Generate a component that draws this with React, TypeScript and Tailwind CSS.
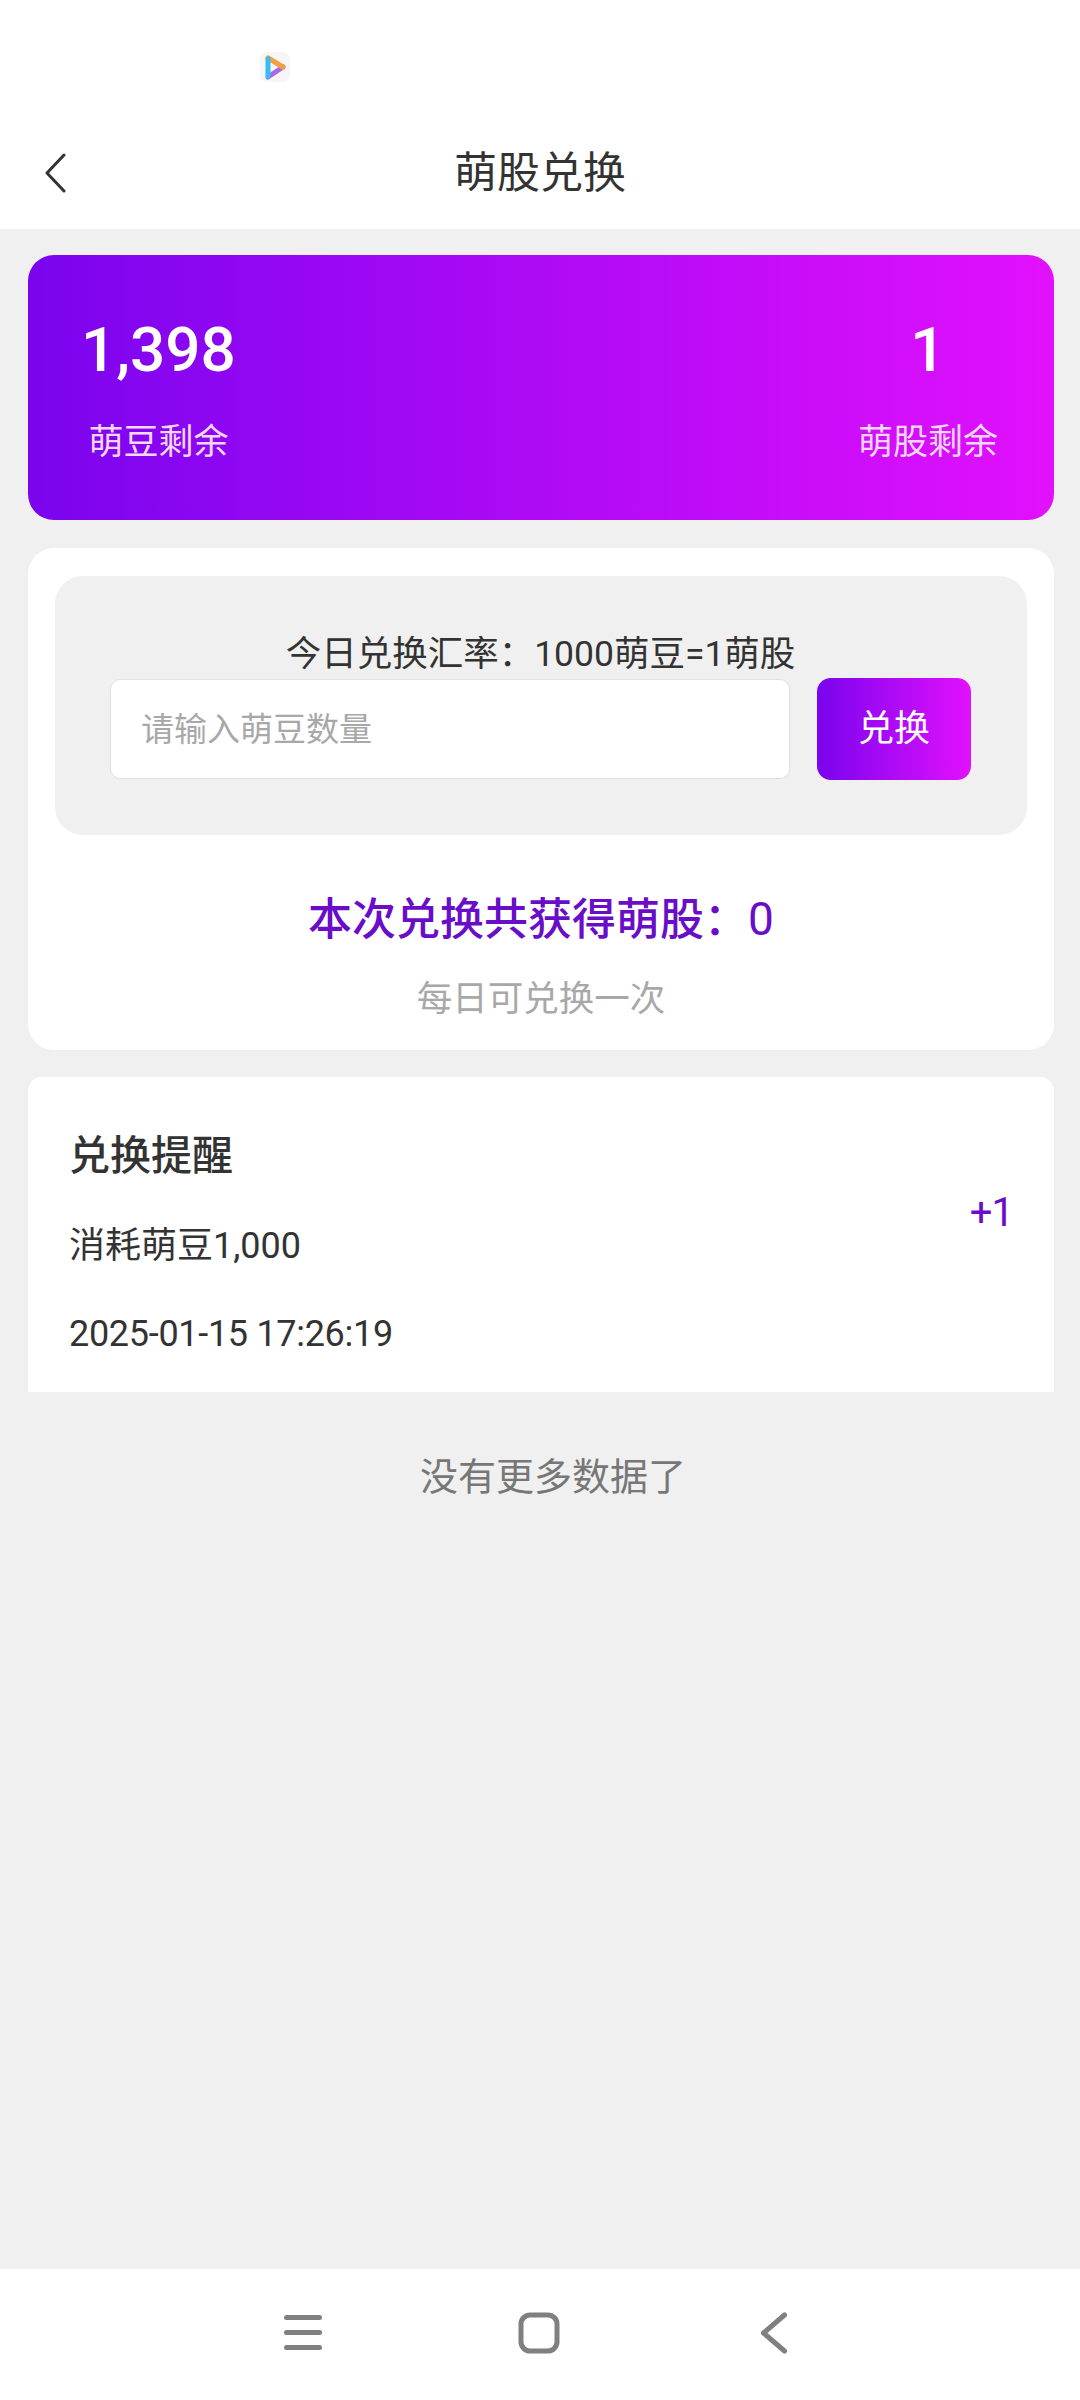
import React from "react";

const FONT = "font-['Roboto','Noto_Sans_CJK_SC',sans-serif]";

function PlayBadge() {
  return (
    <div className="flex h-[30px] w-[30px] items-center justify-center rounded-[7px] bg-[#f6f6f8]">
      <svg width="30" height="30" viewBox="0 0 30 30" fill="none" strokeWidth="5" strokeLinecap="round">
        <path d="M8 25 L23 15" stroke="#a868ea" />
        <path d="M8 6 L23 15" stroke="#f0a040" />
        <path d="M8 7 L8 24" stroke="#38bdf0" />
      </svg>
    </div>
  );
}

function NavIcons() {
  return (
    <nav className="flex h-[131px] items-start bg-white pl-[284px] pt-[43px]">
      <svg width="38" height="40" viewBox="0 0 38 40" fill="none" stroke="#808080" strokeWidth="5" strokeLinecap="round">
        <path d="M2.5 5.5H35.5" />
        <path d="M2.5 20.5H35.5" />
        <path d="M2.5 35.5H35.5" />
      </svg>
      <svg className="ml-[196px]" width="42" height="42" viewBox="0 0 42 42" fill="none" stroke="#808080" strokeWidth="5">
        <rect x="3" y="3" width="36" height="36" rx="9" />
      </svg>
      <svg className="ml-[200px]" width="28" height="42" viewBox="0 0 28 42" fill="none" stroke="#808080" strokeWidth="5" strokeLinecap="round" strokeLinejoin="round">
        <path d="M24.5 3 L3.5 21 L24.5 39" />
      </svg>
    </nav>
  );
}

export default function App() {
  return (
    <div className={`flex min-h-[2400px] flex-col bg-[#f0f0f0] ${FONT}`}>
      <header className="h-[229px] bg-white">
        <div className="h-[142px] pl-[260px] pt-[52px]">
          <PlayBadge />
        </div>
        <div className="grid grid-cols-[1fr_auto_1fr] items-center px-[44px]">
          <svg width="24" height="40" viewBox="0 0 24 40" fill="none" stroke="#333333" strokeWidth="3" strokeLinecap="round" strokeLinejoin="round">
            <path d="M20 2 L3 20 L20 38" />
          </svg>
          <h1 className="pt-[1px] text-[43px] leading-[60px] text-[#333333]">萌股兑换</h1>
        </div>
      </header>

      <main className="flex-1 pl-[28px] pr-[26px] pt-[26px]">
        <section className="flex h-[265px] justify-between rounded-[26px] bg-linear-to-r/srgb from-[#7a04ee] to-[#e210fd] pl-[53px] pr-[56px] pt-[55px]">
          <div className="flex flex-col items-center text-center">
            <div className="text-[62px] font-medium leading-[80px] text-white">1,398</div>
            <div className="mt-[28px] text-[35px] leading-[50px] text-[#f6d6ff]">萌豆剩余</div>
          </div>
          <div className="flex flex-col items-center text-center">
            <div className="text-[62px] font-medium leading-[80px] text-white">1</div>
            <div className="mt-[28px] text-[35px] leading-[50px] text-[#f6d6ff]">萌股剩余</div>
          </div>
        </section>

        <section className="mt-[28px] rounded-[26px] bg-white px-[27px] pb-[26px] pt-[28px]">
          <div className="rounded-[28px] bg-[#f0f0f0] pb-[55px] pl-[55px] pr-[56px] pt-[54px]">
            <p className="text-center text-[35.5px] leading-[48px] text-[#333333]">今日兑换汇率：1000萌豆=1萌股</p>
            <div className="flex items-center gap-[27px]">
              <input
                type="text"
                placeholder="请输入萌豆数量"
                className="h-[100px] flex-1 rounded-[10px] border border-[#e0e0e0] bg-white px-[30px] text-[33px] outline-none placeholder:text-[#a8a8a8]"
              />
              <button className="h-[102px] w-[154px] rounded-[14px] bg-linear-to-r/srgb from-[#7a04ee] to-[#e210fd] text-[36px] text-white">
                兑换
              </button>
            </div>
          </div>
          <p className="mt-[54px] text-center text-[44px] font-medium leading-[60px] text-[#6a0dc9]">
            本次兑换共获得萌股：<span className="text-[46px] font-normal">0</span>
          </p>
          <p className="mt-[24px] text-center text-[35.5px] leading-[50px] text-[#a8a8a8]">每日可兑换一次</p>
        </section>

        <section className="mt-[27px] flex justify-between rounded-t-[14px] bg-white pb-[33px] pl-[41px] pr-[41px] pt-[51px]">
          <div>
            <h2 className="text-[41px] font-medium leading-[56px] text-[#333333]">兑换提醒</h2>
            <p className="mt-[37px] text-[36px] leading-[50px] text-[#333333]">消耗萌豆1,000</p>
            <p className="mt-[38px] text-[36px] leading-[50px] tracking-[-0.3px] text-[#333333]">2025-01-15 17:26:19</p>
          </div>
          <div className="mt-[60px] text-[40px] leading-[50px] tracking-[-1px] text-[#6a0dc9]">+1</div>
        </section>

        <p className="mt-[60px] pl-[24px] text-center text-[38px] leading-[50px] text-[#777777]">没有更多数据了</p>
      </main>

      <NavIcons />
    </div>
  );
}
